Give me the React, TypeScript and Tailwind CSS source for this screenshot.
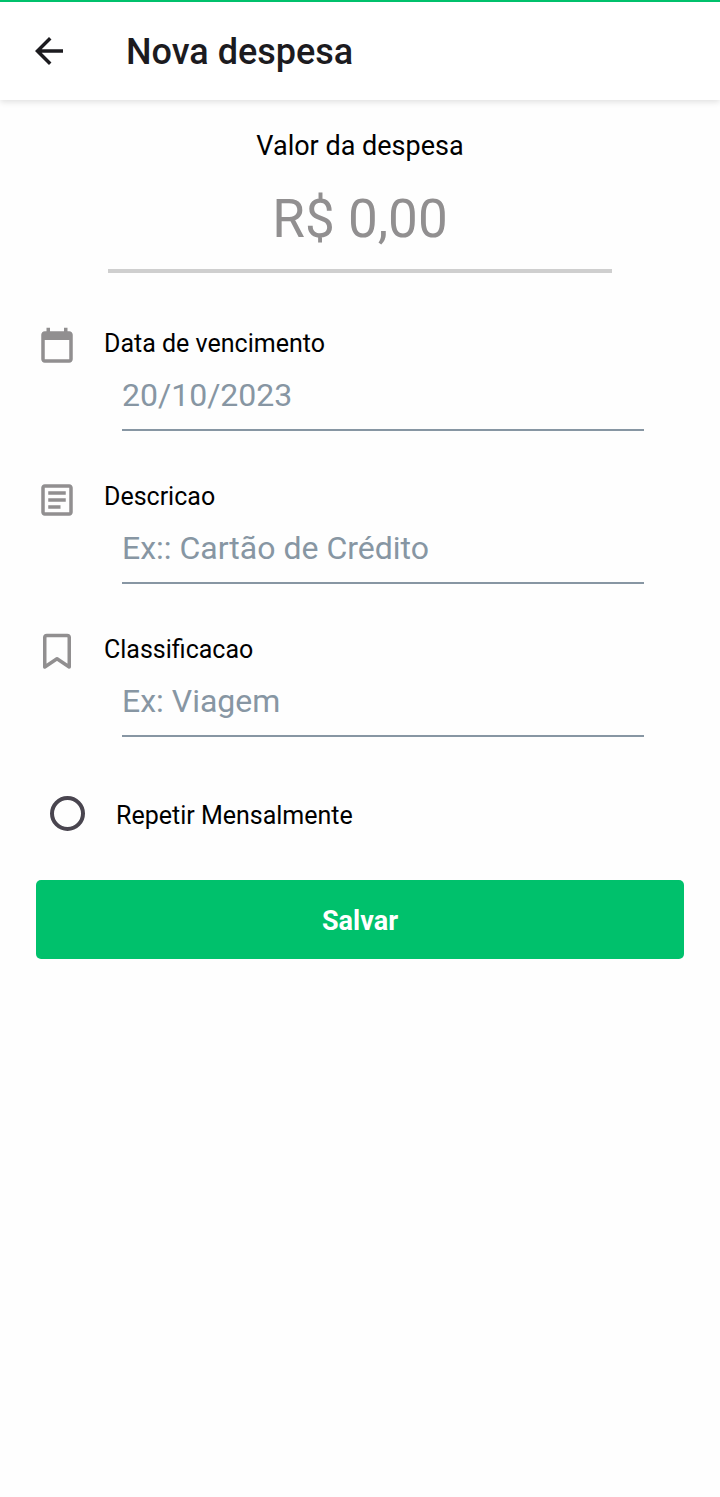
import { useState } from "react";
import type { ReactNode } from "react";

function Icon({ children, className = "" }: { children: ReactNode; className?: string }) {
  return (
    <svg viewBox="0 0 24 24" fill="currentColor" aria-hidden="true" className={`size-[42px] shrink-0 ${className}`}>
      {children}
    </svg>
  );
}

function BackIcon() {
  return (
    <Icon>
      <path d="M20 11H7.83l5.59-5.59L12 4l-8 8 8 8 1.41-1.41L7.83 13H20v-2z" />
    </Icon>
  );
}

function CalendarIcon() {
  return (
    <Icon className="text-[#918f90]">
      <path d="M19 19H5V8h14v11zM16 1v2H8V1H6v2H5c-1.11 0-2 .89-2 2v14c0 1.1.9 2 2 2h14c1.1 0 2-.9 2-2V5c0-1.11-.9-2-2-2h-1V1h-2z" />
    </Icon>
  );
}

function ArticleIcon() {
  return (
    <Icon className="text-[#918f90]">
      <path d="M19 5v14H5V5h14m0-2H5c-1.1 0-2 .9-2 2v14c0 1.1.9 2 2 2h14c1.1 0 2-.9 2-2V5c0-1.1-.9-2-2-2zM14 17H7v-2h7v2zm3-4H7v-2h10v2zm0-4H7V7h10v2z" />
    </Icon>
  );
}

function BookmarkIcon() {
  return (
    <Icon className="text-[#918f90]">
      <path
        d="M5 20V3.200a1.200 1.200 0 0 1 1.200-1.200h11.600a1.200 1.200 0 0 1 1.200 1.200V20l-7-4.700z"
        fill="none"
        stroke="currentColor"
        strokeWidth="2"
        strokeLinejoin="round"
      />
    </Icon>
  );
}

function Field({ id, label, placeholder, icon }: { id: string; label: string; placeholder: string; icon: ReactNode }) {
  return (
    <div className="flex items-start gap-[26px]">
      {icon}
      <div className="flex min-w-0 flex-1 flex-col pt-0.5">
        <label htmlFor={id} className="text-[25px] leading-8 text-black">
          {label}
        </label>
        <input
          id={id}
          type="text"
          placeholder={placeholder}
          className="mr-10 ml-[18px] h-[71px] min-w-0 border-b-2 border-[#8796a3] bg-transparent text-[32px] text-black outline-none placeholder:text-[#8796a3]"
        />
      </div>
    </div>
  );
}

export default function App() {
  const [repeat, setRepeat] = useState(false);

  return (
    <div className="min-h-screen bg-[#fefefe] font-[Roboto,sans-serif]">
      <header className="flex h-[100px] items-center gap-14 border-t-2 border-[#00c16c] bg-white px-7 shadow-[0_2px_6px_rgba(0,0,0,0.12)]">
        <button type="button" aria-label="Voltar" className="text-[#1c1b1f]">
          <BackIcon />
        </button>
        <h1 className="pt-0.5 text-[36px] leading-10 font-medium text-[#1c1b1f]">Nova despesa</h1>
      </header>

      <form className="flex flex-col px-9 pt-[30px]" onSubmit={(e) => e.preventDefault()}>
        <div className="mx-auto flex w-7/9 flex-col">
          <label htmlFor="valor" className="text-center text-[27px] leading-8 text-black">
            Valor da despesa
          </label>
          <input
            id="valor"
            type="text"
            inputMode="decimal"
            placeholder="R$ 0,00"
            className="mt-1 h-[107px] w-full border-b-4 border-[#cfcfcf] bg-transparent pt-0.5 text-center text-[53px] text-black outline-none placeholder:text-[#918f90]"
          />
        </div>

        <div className="mt-[53px] flex flex-col gap-12">
          <Field id="vencimento" label="Data de vencimento" placeholder="20/10/2023" icon={<CalendarIcon />} />
          <Field id="descricao" label="Descricao" placeholder="Ex:: Cartão de Crédito" icon={<ArticleIcon />} />
          <Field id="classificacao" label="Classificacao" placeholder="Ex: Viagem" icon={<BookmarkIcon />} />
        </div>

        <div className="mt-14 flex h-10 items-center self-start pl-3.5">
          <input
            id="repetir"
            type="checkbox"
            checked={repeat}
            onChange={(e) => setRepeat(e.target.checked)}
            className="size-[35px] shrink-0 appearance-none rounded-full border-4 border-[#49454f] checked:bg-[#00c16c]"
          />
          <label htmlFor="repetir" className="pt-1.5 pl-[31px] text-[25px] leading-8 text-black">
            Repetir Mensalmente
          </label>
        </div>

        <button
          type="submit"
          className="mt-[47px] h-[79px] rounded-[5px] bg-[#00c16c] pt-1 text-[27px] font-bold text-white"
        >
          Salvar
        </button>
      </form>
    </div>
  );
}
